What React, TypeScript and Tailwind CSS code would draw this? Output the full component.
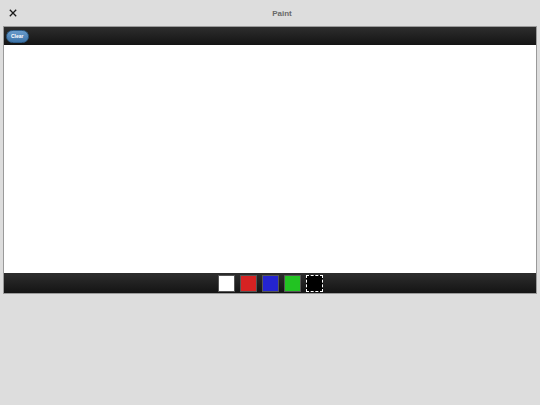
import React from "react";

export default function App() {
  const colors = ["#ffffff", "#d62222", "#2424d0", "#22c322"];
  return (
    <div className="w-[540px] h-[405px] bg-[#dddddd] overflow-hidden" style={{ fontFamily: '"Liberation Sans", Arial, sans-serif' }}>
      <div className="relative h-[26px] flex items-center justify-center">
        <button className="absolute left-[8px] top-[8px] w-[9px] h-[9px] flex items-center justify-center">
          <svg width="8" height="8" viewBox="0 0 8 8">
            <path d="M0.8 0.8 L7.2 7.2 M7.2 0.8 L0.8 7.2" stroke="#1a1a1a" strokeWidth="1.3" />
          </svg>
        </button>
        <span className="text-[8px] font-bold text-[#6a6a6a] ml-[24px] mt-[1px]">Paint</span>
      </div>
      <div className="mx-[3px] border border-[#9a9a9a] flex flex-col">
        <div className="h-[18px] bg-gradient-to-b from-[#2e2e2e] to-[#141414] flex items-center px-[2px]">
          <button className="h-[13px] px-[4px] rounded-full bg-gradient-to-b from-[#6a9ccc] to-[#3d74a9] border border-[#2d5c88] text-white text-[5px] font-bold leading-none flex items-center">
            Clear
          </button>
        </div>
        <div className="h-[228px] bg-white" />
        <div className="h-[20px] bg-gradient-to-b from-[#2e2e2e] to-[#141414] flex items-center justify-center gap-[5px]">
          {colors.map((c) => (
            <div key={c} className="w-[17px] h-[17px] border border-[#555]" style={{ backgroundColor: c }} />
          ))}
          <div className="w-[17px] h-[17px] bg-black border border-dashed border-white" />
        </div>
      </div>
    </div>
  );
}
